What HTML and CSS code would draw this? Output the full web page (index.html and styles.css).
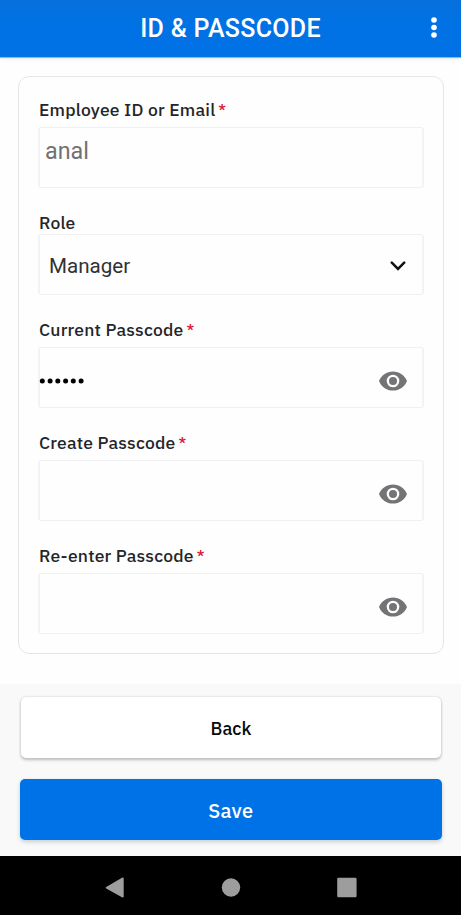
FILE: index.html
```html
<!DOCTYPE html>
<html lang="en">
<head>
<meta charset="utf-8">
<meta name="viewport" content="width=device-width, initial-scale=1">
<title>ID &amp; Passcode</title>
<link rel="stylesheet" href="styles.css">
</head>
<body>
<svg class="defs" aria-hidden="true">
  <symbol id="eye" viewBox="0 0 28 20">
    <path fill-rule="evenodd" d="M14 .4C7.6 .4 2.2 4.3 0 10c2.2 5.7 7.6 9.6 14 9.6S25.800 15.700 28 10C25.800 4.300 20.400 .4 14 .4zM14 3.700a6.300 6.300 0 1 1 0 12.600a6.300 6.300 0 1 1 0-12.600z"/>
    <circle cx="14" cy="10" r="4"/>
  </symbol>
</svg>
<header class="bar">
  <h1 class="title">ID &amp; PASSCODE</h1>
  <svg class="more" viewBox="0 0 6 22"><circle cx="3" cy="3" r="2.8"/><circle cx="3" cy="10.5" r="2.8"/><circle cx="3" cy="18" r="2.8"/></svg>
</header>
<main class="content">
  <section class="card">
    <div class="label"><span>Employee ID or Email</span><span class="req">*</span></div>
    <div class="field field-id"><span>anal</span></div>
    <div class="label label-role"><span>Role</span></div>
    <div class="field field-role"><span>Manager</span>
      <svg class="chevron" viewBox="0 0 16 10"><path d="M1.8 1.7 8 7.9l6.2-6.2"/></svg></div>
    <div class="label"><span>Current Passcode</span><span class="req">*</span></div>
    <div class="field field-pass">
      <svg class="dots" viewBox="0 0 46 6"><circle cx="3.3" cy="3" r="2.5"/><circle cx="11.1" cy="3" r="2.5"/><circle cx="18.8" cy="3" r="2.5"/><circle cx="26.6" cy="3" r="2.5"/><circle cx="34.3" cy="3" r="2.5"/><circle cx="42.1" cy="3" r="2.5"/></svg>
      <svg class="eye"><use href="#eye"/></svg></div>
    <div class="label"><span>Create Passcode</span><span class="req">*</span></div>
    <div class="field field-pass"><svg class="eye"><use href="#eye"/></svg></div>
    <div class="label"><span>Re-enter Passcode</span><span class="req">*</span></div>
    <div class="field field-pass"><svg class="eye"><use href="#eye"/></svg></div>
  </section>
</main>
<footer class="actions">
  <button class="btn back"><span>Back</span></button>
  <button class="btn save"><span>Save</span></button>
</footer>
<nav class="nav">
  <svg viewBox="0 0 20 22"><path d="M1.2 10 17 .8Q18.7 0 18.7 1.6v17.8q0 1.6-1.7.8L1.2 11.5q-1.2-.7 0-1.5z"/></svg>
  <svg viewBox="0 0 20 22"><circle cx="10" cy="10.5" r="9.2"/></svg>
  <svg viewBox="0 0 20 22"><rect x=".2" y=".7" width="19.4" height="19.6" rx="1.3"/></svg>
</nav>
</body>
</html>
```
FILE: styles.css
```css
* { box-sizing: border-box; }
body {
  margin: 0;
  height: 915px;
  display: flex;
  flex-direction: column;
  overflow: hidden;
  background: #fefefe;
  color: #242528;
  font-family: "IBM Plex Sans", "Noto Sans", sans-serif;
}
.defs { display: none; }
.bar {
  display: grid;
  grid-template-columns: 55px 1fr 55px;
  align-items: center;
  justify-items: center;
  height: 57px;
  background: linear-gradient(#0670dc, #0072e5 45%, #0072e7);
  box-shadow: 0 1px 1px #8bbcf0, 0 2px 5px #f5eeee;
}
.title {
  grid-column: 2;
  margin: 0;
  color: #fff;
  font: 500 25px/30px Roboto, sans-serif;
  letter-spacing: .3px;
  white-space: nowrap;
}
.more { width: 6px; height: 22px; margin-top: -1px; fill: #fff; }
.content { height: 627px; padding: 19px 17px 0 18px; }
.card {
  height: 578px;
  padding: 19px 19px 0 19px;
  border: 1px solid #e6e6e7;
  border-radius: 11px;
}
.label {
  display: flex;
  height: 31px;
  padding-left: 1px;
  font-size: 17.5px;
  font-weight: 500;
  line-height: 28px;
  letter-spacing: .2px;
  white-space: nowrap;
}
.label-role { height: 25px; }
.req { margin-left: 3px; color: #da1737; font-size: 15px; }
.field {
  display: flex;
  align-items: center;
  height: 61px;
  margin-bottom: 21px;
  border: 1px solid #f0f0f3;
  border-width: 1px 2px 1px 2px;
  border-left-color: #f3f3f7;
  border-right-color: #f3f3f6;
  border-radius: 3px;
}
.field-id {
  align-items: flex-start;
  padding: 8px 5px;
  color: #707173;
  font: 400 23.3px/30px Roboto, sans-serif;
}
.field-role {
  justify-content: space-between;
  padding: 2px 16px 0 9px;
  color: #303134;
  font: 400 20.6px/28px Roboto, sans-serif;
}
.chevron { width: 16px; height: 10px; fill: none; stroke: #111; stroke-width: 2.5; stroke-linecap: round; }
.field-pass { padding-top: 7px; padding-right: 15px; }
.dots { width: 46px; height: 6px; margin-left: -1px; fill: #000; }
.eye { width: 28px; height: 20px; margin: 0 0 0 auto; fill: #747477; }
.actions {
  display: flex;
  flex-direction: column;
  gap: 21px;
  height: 172px;
  padding: 13px 20px 0 21px;
  background: #f9f9f9;
}
.btn {
  height: 61px;
  flex: none;
  padding: 0;
  border: 0;
  border-radius: 5px;
  font: 500 18px/26px "IBM Plex Sans", "Noto Sans", sans-serif;
}
.back { padding-top: 2px; color: #090909; background: #fff; box-shadow: 0 0 2px #c4c4c4, 0 2px 3px #bcbcbc; }
.save { padding-top: 2px; margin: 0 -.5px 0 -1px; color: #fff; background: #0072e7; box-shadow: 0 2px 4px #c8cdd2; font-size: 20px; letter-spacing: .3px; }
.nav {
  flex: 1;
  display: flex;
  justify-content: space-between;
  align-items: center;
  padding: 4px 104px 0 105px;
  background: #000;
}
.nav svg { width: 20px; height: 22px; fill: #9d9d9d; }
```
